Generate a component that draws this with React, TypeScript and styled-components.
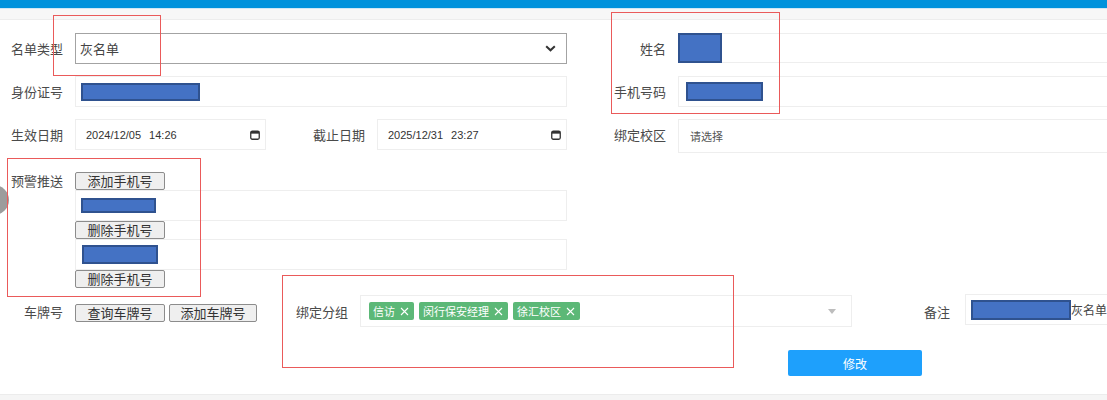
import React from "react";
import styled, { createGlobalStyle } from "styled-components";

const Global = createGlobalStyle`
  html, body { margin: 0; padding: 0; background: #fff; }
  body {
    font-family: "Noto Sans CJK SC", "Noto Sans", sans-serif;
    font-size: 13px;
    color: #4a4a4a;
  }
  * { box-sizing: border-box; }
`;

const Page = styled.div`
  position: relative;
  width: 1107px;
  height: 400px;
  overflow: hidden;
  background: #fff;
`;

const TopBar = styled.div`
  height: 9px;
  background: #0092dc;
  border-bottom: 1px solid #cfe8f6;
`;

const SubBar = styled.div`
  height: 11px;
  background: #f7f7f7;
  border-bottom: 1px solid #ededed;
`;

const Form = styled.div`
  width: 1130px;
  padding-top: 13px;
`;

const TopGrid = styled.div`
  display: grid;
  grid-template-columns: 75px 191px 111px 190px 111px 1fr;
  grid-auto-rows: 31px;
  row-gap: 12px;
`;

const Label = styled.div<{ $pad?: number }>`
  display: flex;
  align-items: center;
  justify-content: flex-end;
  padding-right: ${(p) => p.$pad ?? 12}px;
  white-space: nowrap;
  color: #4a4a4a;
  font-size: 13px;
`;

const TopLabel = styled(Label)`
  align-items: flex-start;
  line-height: 17px;
`;

const Field = styled.div<{ $span?: number; $h?: number }>`
  grid-column: span ${(p) => p.$span ?? 1};
  height: ${(p) => p.$h ?? 31}px;
  border: 1px solid #eeeeee;
  background: #fff;
  display: flex;
  align-items: center;
  padding-left: 5px;
  font-size: 12px;
  color: #555;
`;

const SelectBox = styled(Field)`
  border-color: #a3a3a3;
  justify-content: space-between;
  padding: 0 10px 0 4px;
  font-size: 13px;
  color: #444;
`;

const DateBox = styled(Field)`
  justify-content: space-between;
  padding: 0 5px 0 10px;
  font-family: "Liberation Sans", Arial, sans-serif;
  font-size: 11px;
  color: #333;
  word-spacing: 5px;
`;

const Hint = styled.span`
  padding-left: 6px;
  font-size: 11px;
  color: #555;
`;

const Redact = styled.div<{ $w: number; $h: number; $m?: string }>`
  width: ${(p) => p.$w}px;
  height: ${(p) => p.$h}px;
  margin: ${(p) => p.$m ?? "0"};
  flex: none;
  background: #4472c4;
  border: 2px solid #2f528f;
`;

const AlertRow = styled.div`
  display: grid;
  grid-template-columns: 75px 492px;
  margin-top: 22px;
`;

const Stack = styled.div`
  display: flex;
  flex-direction: column;
  align-items: flex-start;
`;

const StackInput = styled.div`
  width: 492px;
  height: 31px;
  border: 1px solid #eeeeee;
  display: flex;
  align-items: center;
  padding-left: 5px;
`;

const GrayBtn = styled.button<{ $w?: number }>`
  width: ${(p) => p.$w ?? 90}px;
  height: 18px;
  padding: 0;
  margin: 0;
  border: 1px solid #8c8c8c;
  border-radius: 2px;
  background: #efefef;
  font-family: "Noto Sans CJK SC", sans-serif;
  font-size: 13px;
  line-height: 16px;
  color: #333;
`;

const BottomRow = styled.div`
  display: grid;
  grid-template-columns: 75px 185px 100px 492px 113px 1fr;
  align-items: center;
  margin-top: 7px;
  height: 32px;
`;

const BtnGroup = styled.div`
  display: flex;
  gap: 4px;
  padding-top: 4px;
`;

const TagSelect = styled.div`
  height: 32px;
  border: 1px solid #eeeeee;
  display: flex;
  align-items: center;
  padding: 0 15px 0 8px;
  gap: 5px;
`;

const Tag = styled.span`
  display: inline-flex;
  align-items: center;
  gap: 5px;
  height: 18px;
  padding: 0 5px 0 4px;
  background: #5cb877;
  border-radius: 2px;
  color: #fff;
  font-size: 11px;
`;

const Caret = styled.span`
  margin-left: auto;
  width: 0;
  height: 0;
  border-left: 4px solid transparent;
  border-right: 4px solid transparent;
  border-top: 5px solid #bdbdbd;
`;

const RemarkBox = styled.div`
  height: 31px;
  margin-top: -3px;
  border: 1px solid #eeeeee;
  display: flex;
  align-items: center;
  padding-left: 5px;
  font-size: 12px;
  color: #444;
`;

const SubmitRow = styled.div`
  padding-left: 788px;
  margin-top: 23px;
`;

const Submit = styled.button`
  width: 134px;
  height: 26px;
  border: none;
  border-radius: 2px;
  background: #1ea0fc;
  color: #fff;
  font-family: "Noto Sans CJK SC", sans-serif;
  font-size: 12px;
`;

const Footer = styled.div`
  margin-top: 18px;
  height: 10px;
  background: #f5f5f5;
  border-top: 1px solid #ececec;
`;

const Mark = styled.div<{ $x: number; $y: number; $w: number; $h: number }>`
  position: absolute;
  left: ${(p) => p.$x}px;
  top: ${(p) => p.$y}px;
  width: ${(p) => p.$w}px;
  height: ${(p) => p.$h}px;
  border: 1px solid #ea5a5a;
  pointer-events: none;
`;

const SideKnob = styled.div`
  position: absolute;
  left: -21px;
  top: 185px;
  width: 30px;
  height: 30px;
  border-radius: 50%;
  background: #9c9c9c;
`;

const Chevron = () => (
  <svg width="11" height="7" viewBox="0 0 11 7">
    <path d="M1.2 1.2 L5.5 5.3 L9.8 1.2" fill="none" stroke="#333" strokeWidth="2" />
  </svg>
);

const CalIcon = () => (
  <svg width="10" height="10" viewBox="0 0 10 10">
    <rect x="0.75" y="1.25" width="8.5" height="8" rx="1.5" fill="none" stroke="#333" strokeWidth="1.3" />
    <rect x="0.75" y="1.25" width="8.5" height="2.4" fill="#333" />
  </svg>
);

const Close = () => (
  <svg width="9" height="9" viewBox="0 0 9 9">
    <path d="M1 1 L8 8 M8 1 L1 8" stroke="#fff" strokeWidth="1.1" />
  </svg>
);

export default function App() {
  return (
    <>
      <Global />
      <Page>
        <TopBar />
        <SubBar />
        <Form>
          <TopGrid>
            <Label>名单类型</Label>
            <SelectBox $span={3}>
              <span>灰名单</span>
              <Chevron />
            </SelectBox>
            <Label>姓名</Label>
            <Field $h={30} style={{ paddingLeft: 0 }}>
              <Redact $w={44} $h={30} $m="-1px 0 0 -1px" />
            </Field>

            <Label>身份证号</Label>
            <Field $span={3}>
              <Redact $w={119} $h={18} />
            </Field>
            <Label>手机号码</Label>
            <Field>
              <Redact $w={77} $h={19} $m="0 0 0 2px" />
            </Field>

            <Label>生效日期</Label>
            <DateBox>
              <span>2024/12/05 14:26</span>
              <CalIcon />
            </DateBox>
            <Label>截止日期</Label>
            <DateBox>
              <span>2025/12/31 23:27</span>
              <CalIcon />
            </DateBox>
            <Label>绑定校区</Label>
            <Field $h={34}>
              <Hint>请选择</Hint>
            </Field>
          </TopGrid>

          <AlertRow>
            <TopLabel>预警推送</TopLabel>
            <Stack>
              <GrayBtn>添加手机号</GrayBtn>
              <StackInput>
                <Redact $w={75} $h={15} />
              </StackInput>
              <GrayBtn>删除手机号</GrayBtn>
              <StackInput>
                <Redact $w={76} $h={19} $m="0 0 0 1px" />
              </StackInput>
              <GrayBtn>删除手机号</GrayBtn>
            </Stack>
          </AlertRow>

          <BottomRow>
            <Label>车牌号</Label>
            <BtnGroup>
              <GrayBtn>查询车牌号</GrayBtn>
              <GrayBtn $w={88}>添加车牌号</GrayBtn>
            </BtnGroup>
            <Label>绑定分组</Label>
            <TagSelect>
              <Tag>
                信访
                <Close />
              </Tag>
              <Tag>
                闵行保安经理
                <Close />
              </Tag>
              <Tag>
                徐汇校区
                <Close />
              </Tag>
              <Caret />
            </TagSelect>
            <Label $pad={15}>备注</Label>
            <RemarkBox>
              <Redact $w={100} $h={20} />
              <span>灰名单</span>
            </RemarkBox>
          </BottomRow>

          <SubmitRow>
            <Submit>修改</Submit>
          </SubmitRow>
          <Footer />
        </Form>

        <SideKnob />
        <Mark $x={53} $y={15} $w={108} $h={61} />
        <Mark $x={611} $y={12} $w={169} $h={102} />
        <Mark $x={7} $y={158} $w={194} $h={139} />
        <Mark $x={282} $y={275} $w={452} $h={93} />
      </Page>
    </>
  );
}
